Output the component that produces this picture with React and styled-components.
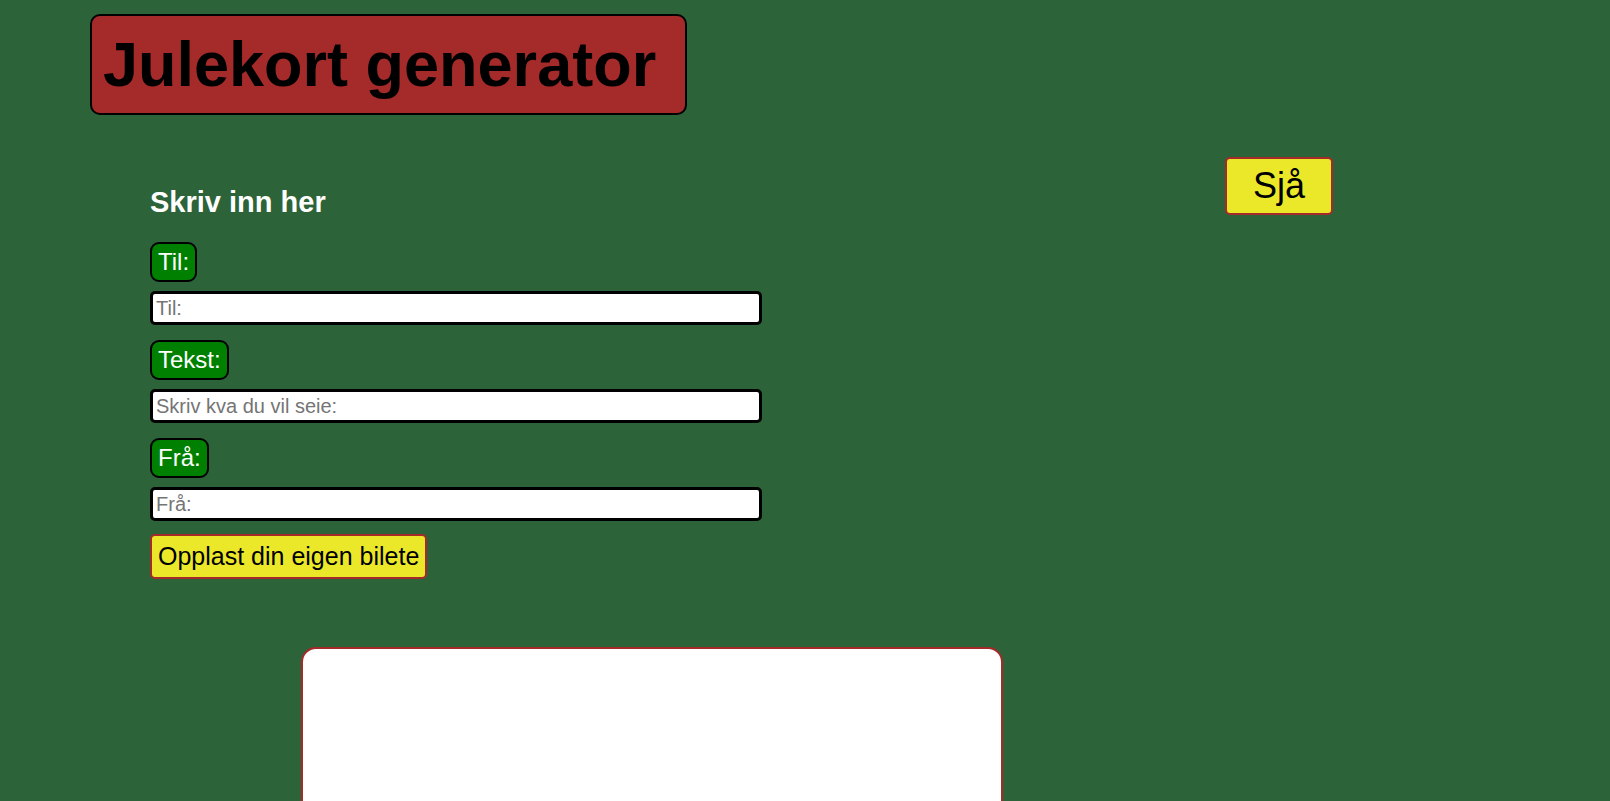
import styled, { createGlobalStyle } from "styled-components";

const GlobalStyle = createGlobalStyle`
  html, body {
    margin: 0;
    padding: 0;
    background-color: #2c6339;
    font-family: "Liberation Sans", Arial, sans-serif;
  }
`;

const Page = styled.div`
  min-height: 801px;
  padding-top: 14px;
  overflow: hidden;
`;

const Header = styled.header`
  display: flex;
  padding-left: 90px;
`;

const Title = styled.h1`
  margin: 0;
  padding: 12px 29px 13px 11px;
  font-size: 63px;
  font-weight: 700;
  color: #000;
  background-color: #a52a2a;
  border: 2px solid #000;
  border-radius: 10px;
`;

const Content = styled.main`
  display: flex;
  align-items: flex-start;
  padding-left: 150px;
`;

const Form = styled.form`
  display: flex;
  flex-direction: column;
  align-items: flex-start;
  width: 612px;
  padding-top: 71px;
`;

const Heading = styled.h2`
  margin: 0 0 23px;
  font-size: 29px;
  font-weight: 700;
  color: #fff;
`;

const Label = styled.label`
  padding: 4px 6px;
  font-size: 24px;
  color: #fff;
  background-color: #008000;
  border: 2px solid #000;
  border-radius: 9px;
`;

const Input = styled.input`
  box-sizing: border-box;
  width: 612px;
  height: 34px;
  margin: 9px 0 15px;
  padding: 0 3px;
  font-family: "Liberation Sans", Arial, sans-serif;
  font-size: 20px;
  background: #fff;
  border: 3px solid #000;
  border-radius: 5px;
  outline: none;

  &::placeholder {
    color: #757575;
  }

  &:last-of-type {
    margin-bottom: 13px;
  }
`;

const YellowButton = styled.button`
  font-family: "Liberation Sans", Arial, sans-serif;
  font-size: ${(p) => (p.$big ? "36px" : "25px")};
  padding: ${(p) => (p.$big ? "6px 26px" : "6px 6px")};
  color: #000;
  background-color: #ebe82a;
  border: 2px solid #a52a2a;
  border-radius: 5px;
  cursor: pointer;
`;

const SeeButton = styled(YellowButton)`
  margin-top: 42px;
  margin-left: 463px;
`;

const Card = styled.section`
  box-sizing: border-box;
  width: 702px;
  height: 400px;
  margin: 68px 0 0 301px;
  background-color: #fff;
  border: 2px solid #a52a2a;
  border-radius: 15px;
`;

const fields = [
  { id: "til", label: "Til:", placeholder: "Til:" },
  { id: "tekst", label: "Tekst:", placeholder: "Skriv kva du vil seie:" },
  { id: "fra", label: "Frå:", placeholder: "Frå:" },
];

export default function App() {
  return (
    <>
      <GlobalStyle />
      <Page>
        <Header>
          <Title>Julekort generator</Title>
        </Header>
        <Content>
          <Form onSubmit={(e) => e.preventDefault()}>
            <Heading>Skriv inn her</Heading>
            {fields.map((f) => (
              <>
                <Label key={f.id + "-l"} htmlFor={f.id}>
                  {f.label}
                </Label>
                <Input key={f.id} id={f.id} placeholder={f.placeholder} />
              </>
            ))}
            <YellowButton type="button">Opplast din eigen bilete</YellowButton>
          </Form>
          <SeeButton type="button" $big>
            Sjå
          </SeeButton>
        </Content>
        <Card />
      </Page>
    </>
  );
}
